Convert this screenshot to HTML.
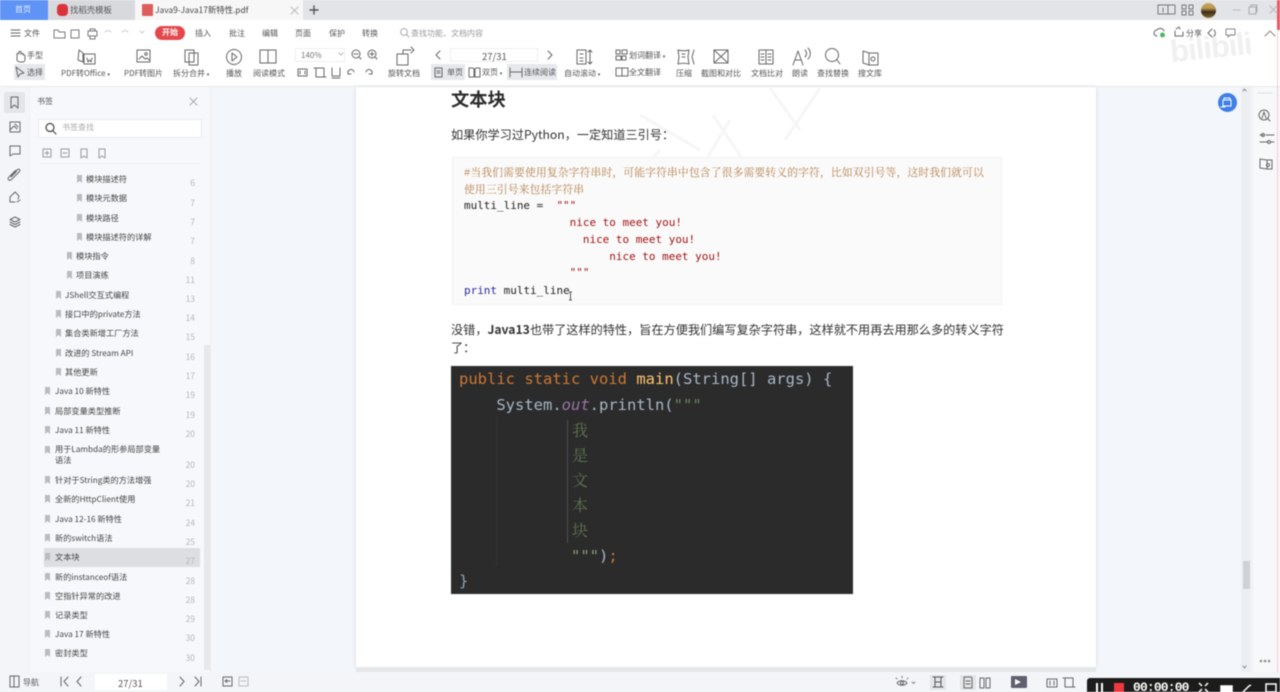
<!DOCTYPE html>
<html lang="zh"><head><meta charset="utf-8"><title>Java9-Java17新特性.pdf</title>
<style>
html,body{margin:0;padding:0;background:#f3f6fa;}
#r{position:relative;width:1280px;height:692px;overflow:hidden;background:#f3f6fa;font-family:"Noto Sans CJK SC","Liberation Sans",sans-serif;filter:blur(.45px);}
.b{position:absolute;}
.t{position:absolute;white-space:nowrap;height:12px;line-height:12px;font-size:8px;color:#555;margin-top:1px;}
.s{font-size:8.2px;color:#444;margin-top:0;}
.n{font-size:8.5px;color:#b5b8bc;width:24px;text-align:right;left:171px;margin-top:0;}
.m{position:absolute;white-space:pre;font-family:"DejaVu Sans Mono","Liberation Mono",monospace;font-size:10.97px;height:16px;line-height:16px;color:#222;left:464px;}
.cm{position:absolute;left:464px;white-space:nowrap;font-family:"Noto Serif CJK SC","Liberation Serif",serif;font-size:10.8px;color:#b5824f;height:16px;line-height:16px;}
.j{position:absolute;white-space:pre;font-family:"DejaVu Sans Mono","Liberation Mono",monospace;font-size:15.5px;height:24px;line-height:24px;color:#a9b7c6;left:459px;}
.jc{position:absolute;left:572px;font-family:"Noto Serif CJK SC",serif;font-size:16px;height:24px;line-height:24px;color:#5f7350;}
.p{position:absolute;white-space:nowrap;font-size:12.17px;color:#333;height:18px;line-height:18px;left:451px;}
svg{position:absolute;left:0;top:0;}
</style></head><body><div id="r">
<!-- tab bar -->
<div class="b" style="left:0;top:0;width:1280px;height:20px;background:#e2e4e7"></div>
<div class="b" style="left:0;top:0;width:48px;height:20px;background:#5f93f5"></div>
<div class="b" style="left:48px;top:0;width:87px;height:20px;background:#d8d9dc"></div>
<div class="b" style="left:135px;top:0;width:168px;height:20px;background:#f7f7f8"></div>
<span class="t" style="left:15px;top:3px;color:#e8f0ff">首页</span>
<div class="b" style="left:57px;top:4px;width:11px;height:12px;border-radius:4px;background:#d9343c"></div>
<span class="t" style="left:70px;top:3px;font-size:8.4px;color:#555">找稻壳模板</span>
<div class="b" style="left:142px;top:4px;width:11px;height:12px;border-radius:1px;background:#dc5d5a"></div>
<span class="t" style="left:155px;top:3px;font-size:8.4px;color:#444">Java9-Java17新特性.pdf</span>
<div class="b" style="left:1201px;top:3px;width:15px;height:15px;border-radius:50%;background:linear-gradient(#c9a860 0,#b8954f 35%,#3a2c18 60%,#8a6a30 100%)"></div>
<!-- toolbar -->
<div class="b" style="left:0;top:20px;width:1280px;height:66px;background:#fff"></div>
<div class="b" style="left:0;top:86px;width:1280px;height:1px;background:#e8e9eb"></div>
<div class="b" style="left:155px;top:26px;width:30px;height:14px;border-radius:7px;background:#e4484c"></div>
<span class="t" style="left:162px;top:26px;color:#fff;font-weight:bold">开始</span>
<span class="t" style="left:24px;top:27px">文件</span>
<span class="t" style="left:195px;top:27px">插入</span>
<span class="t" style="left:229px;top:27px">批注</span>
<span class="t" style="left:262px;top:27px">编辑</span>
<span class="t" style="left:295px;top:27px">页面</span>
<span class="t" style="left:329px;top:27px">保护</span>
<span class="t" style="left:362px;top:27px">转换</span>
<span class="t" style="left:411px;top:27px;color:#999">查找功能、文档内容</span>
<span class="t" style="left:1186px;top:27px;color:#555">分享</span>
<!-- highlights -->
<div class="b" style="left:14px;top:64px;width:31px;height:16px;background:#e6e8eb"></div>
<div class="b" style="left:431px;top:64px;width:34px;height:16px;background:#e6e8eb"></div>
<div class="b" style="left:507px;top:64px;width:50px;height:16px;background:#e6e8eb"></div>
<div class="b" style="left:295px;top:48px;width:50px;height:14px;border:1px solid #eee;box-sizing:border-box"></div>
<div class="b" style="left:450px;top:48px;width:88px;height:14px;border:1px solid #eee;box-sizing:border-box"></div>
<span class="t" style="left:27px;top:49px">手型</span>
<span class="t" style="left:27px;top:66px">选择</span>
<span class="t" style="left:61px;top:67px">PDF转Office <span style="font-size:5px">▾</span></span>
<span class="t" style="left:124px;top:67px">PDF转图片</span>
<span class="t" style="left:173px;top:67px">拆分合并 <span style="font-size:5px">▾</span></span>
<span class="t" style="left:226px;top:67px">播放</span>
<span class="t" style="left:253px;top:67px">阅读模式</span>
<span class="t" style="left:301px;top:49px;color:#777">140%</span>
<span class="t" style="left:388px;top:67px">旋转文档</span>
<span class="t" style="left:482px;top:49px;font-size:9.5px;color:#555">27/31</span>
<span class="t" style="left:447px;top:66px">单页</span>
<span class="t" style="left:482px;top:66px">双页 <span style="font-size:5px">▾</span></span>
<span class="t" style="left:524px;top:66px">连续阅读</span>
<span class="t" style="left:564px;top:67px">自动滚动 <span style="font-size:5px">▾</span></span>
<span class="t" style="left:629px;top:49px">划词翻译 <span style="font-size:5px">▾</span></span>
<span class="t" style="left:629px;top:66px">全文翻译</span>
<span class="t" style="left:676px;top:67px">压缩</span>
<span class="t" style="left:701px;top:67px">截图和对比</span>
<span class="t" style="left:751px;top:67px">文档比对</span>
<span class="t" style="left:792px;top:67px">朗读</span>
<span class="t" style="left:817px;top:67px">查找替换</span>
<span class="t" style="left:858px;top:67px">搜文库</span>
<span class="b" style="left:1170px;top:30px;font:bold 31px 'Liberation Sans',sans-serif;color:#f0f0f0;transform:rotate(-6deg);white-space:nowrap;letter-spacing:-1px">bilibili</span>
<!-- left rail / sidebar -->
<div class="b" style="left:0;top:87px;width:29px;height:585px;background:#f3f5f8;border-right:1px solid #eceef1"></div>
<div class="b" style="left:30px;top:87px;width:180px;height:585px;background:#f6f8fb;border-right:1px solid #eceef1"></div>
<div class="b" style="left:4px;top:92px;width:21px;height:21px;background:#e3e5e8;border-radius:2px"></div>
<span class="t" style="left:37px;top:95px">书签</span>
<div class="b" style="left:38px;top:119px;width:164px;height:19px;background:#fff;border:1px solid #e8eaed;border-radius:2px;box-sizing:border-box"></div>
<span class="t" style="left:62px;top:121px;color:#aaa">书签查找</span>
<div class="b" style="left:40px;top:163px;width:160px;height:1px;background:#eef0f2"></div>
<div class="b" style="left:44px;top:548px;width:156px;height:19px;background:#dcdee2"></div>
<div class="b" style="left:204px;top:345px;width:6px;height:325px;background:#e6e8eb"></div>
<svg width="1280" height="692"><path fill="#b8bbbf" d="M77 175h5v8l-2.500-2-2.500 2zM77 194h5v8l-2.500-2-2.500 2zM77 214h5v8l-2.500-2-2.500 2zM77 233h5v8l-2.500-2-2.500 2zM67 252h5v8l-2.500-2-2.500 2zM67 271h5v8l-2.500-2-2.500 2zM56 291h5v8l-2.500-2-2.500 2zM56 310h5v8l-2.500-2-2.500 2zM56 329h5v8l-2.500-2-2.500 2zM56 349h5v8l-2.500-2-2.500 2zM56 368h5v8l-2.500-2-2.500 2zM45 387h5v8l-2.500-2-2.500 2zM45 407h5v8l-2.500-2-2.500 2zM45 426h5v8l-2.500-2-2.500 2zM45 446h5v8l-2.500-2-2.500 2zM45 476h5v8l-2.500-2-2.500 2zM45 495h5v8l-2.500-2-2.500 2zM45 515h5v8l-2.500-2-2.500 2zM45 534h5v8l-2.500-2-2.500 2zM45 553h5v8l-2.500-2-2.500 2zM45 573h5v8l-2.500-2-2.500 2zM45 592h5v8l-2.500-2-2.500 2zM45 611h5v8l-2.500-2-2.500 2zM45 630h5v8l-2.500-2-2.500 2zM45 649h5v8l-2.500-2-2.500 2z"/></svg>
<span class="t s" style="left:86px;top:173px">模块描述符</span><span class="t n" style="top:177px">6</span>
<span class="t s" style="left:86px;top:192px">模块元数据</span><span class="t n" style="top:197px">7</span>
<span class="t s" style="left:86px;top:212px">模块路径</span><span class="t n" style="top:216px">7</span>
<span class="t s" style="left:86px;top:231px">模块描述符的详解</span><span class="t n" style="top:235px">7</span>
<span class="t s" style="left:76px;top:250px">模块指令</span><span class="t n" style="top:255px">8</span>
<span class="t s" style="left:76px;top:269px">项目演练</span><span class="t n" style="top:274px">11</span>
<span class="t s" style="left:65px;top:289px">JShell交互式编程</span><span class="t n" style="top:293px">13</span>
<span class="t s" style="left:65px;top:308px">接口中的private方法</span><span class="t n" style="top:312px">14</span>
<span class="t s" style="left:65px;top:327px">集合类新增工厂方法</span><span class="t n" style="top:331px">15</span>
<span class="t s" style="left:65px;top:347px">改进的 Stream API</span><span class="t n" style="top:351px">16</span>
<span class="t s" style="left:65px;top:366px">其他更新</span><span class="t n" style="top:370px">17</span>
<span class="t s" style="left:55px;top:385px">Java 10 新特性</span><span class="t n" style="top:389px">19</span>
<span class="t s" style="left:55px;top:405px">局部变量类型推断</span><span class="t n" style="top:409px">19</span>
<span class="t s" style="left:55px;top:424px">Java 11 新特性</span><span class="t n" style="top:428px">20</span>
<span class="t s" style="left:55px;top:443px">用于Lambda的形参局部变量</span>
<span class="t s" style="left:55px;top:454px">语法</span><span class="t n" style="top:459px">20</span>
<span class="t s" style="left:55px;top:474px">针对于String类的方法增强</span><span class="t n" style="top:478px">20</span>
<span class="t s" style="left:55px;top:493px">全新的HttpClient使用</span><span class="t n" style="top:497px">21</span>
<span class="t s" style="left:55px;top:513px">Java 12-16 新特性</span><span class="t n" style="top:517px">24</span>
<span class="t s" style="left:55px;top:532px">新的switch语法</span><span class="t n" style="top:536px">25</span>
<span class="t s" style="left:55px;top:551px">文本块</span><span class="t n" style="top:555px">27</span>
<span class="t s" style="left:55px;top:571px">新的instanceof语法</span><span class="t n" style="top:575px">28</span>
<span class="t s" style="left:55px;top:590px">空指针异常的改进</span><span class="t n" style="top:594px">28</span>
<span class="t s" style="left:55px;top:609px">记录类型</span><span class="t n" style="top:613px">29</span>
<span class="t s" style="left:55px;top:628px">Java 17 新特性</span><span class="t n" style="top:632px">30</span>
<span class="t s" style="left:55px;top:647px">密封类型</span><span class="t n" style="top:652px">30</span>
<!-- page -->
<div class="b" style="left:356px;top:87px;width:740px;height:580px;background:#fff;box-shadow:0 0 4px #d5d7da"></div>
<svg width="1280" height="692"><g fill="none" stroke="#f6f6f6" stroke-width="3">
<path d="M653 168L697 222M587 245L617 278M713 115L760 185M730 120L700 170L745 195M770 88L800 130M820 88L785 140M660 150L625 190L690 222M640 115L700 150"/></g></svg>
<span class="b" style="left:451px;top:86px;font-size:18.3px;font-weight:bold;color:#2b2b2b;line-height:26px;white-space:nowrap">文本块</span>
<span class="p" style="top:125px">如果你学习过Python，一定知道三引号：</span>
<div class="b" style="left:452px;top:157px;width:550px;height:148px;box-sizing:border-box;background:#fafafa;border:1px solid #f1f1f1;border-radius:2px"></div>
<span class="cm" style="top:165px;letter-spacing:.13px">#当我们需要使用复杂字符串时，可能字符串中包含了很多需要转义的字符，比如双引号等，这时我们就可以</span>
<span class="cm" style="top:182px;letter-spacing:.13px">使用三引号来包括字符串</span>
<span class="m" style="top:198px">multi_line =  <span style="color:#a31515">"""</span></span>
<span class="m" style="top:215px;color:#a31515">                nice to meet you!</span>
<span class="m" style="top:232px;color:#a31515">                  nice to meet you!</span>
<span class="m" style="top:249px;color:#a31515">                      nice to meet you!</span>
<span class="m" style="top:265px;color:#a31515">                """</span>
<span class="m" style="top:283px"><span style="color:#2a2a9a">print</span> multi_line</span>
<svg width="1280" height="692"><path d="M569 292h3M569 300h3M570.500 292v8" stroke="#555" fill="none"/></svg>
<span class="p" style="top:320px">没错，<b>Java13</b>也带了这样的特性，旨在方便我们编写复杂字符串，这样就不用再去用那么多的转义字符</span>
<span class="p" style="top:338px">了：</span>
<!-- code image -->
<div class="b" style="left:451px;top:366px;width:402px;height:228px;background:#2b2b2b"></div>
<span class="j" style="top:367px"><span style="color:#cc7832">public static void</span> <span style="color:#ffc66d">main</span>(String[] args) {</span>
<span class="j" style="top:393px">    System.<i style="color:#9876aa">out</i>.println(<span style="color:#6a8759">"""</span></span>
<span class="jc" style="top:418px">我</span><span class="jc" style="top:443px">是</span><span class="jc" style="top:468px">文</span><span class="jc" style="top:493px">本</span><span class="jc" style="top:518px">块</span>
<span class="j" style="top:544px;left:571px"><span style="color:#8a9a7a">"""</span>)<span style="color:#cc7832">;</span></span>
<span class="j" style="top:569px;color:#8fa5b5">}</span>
<div class="b" style="left:567px;top:420px;width:1px;height:123px;background:#4a4f4a"></div>
<div class="b" style="left:496px;top:416px;width:1px;height:150px;background:#333"></div>
<!-- right -->
<div class="b" style="left:1218px;top:93px;width:19px;height:19px;border-radius:50%;background:#3f7fe8"></div>
<div class="b" style="left:1241px;top:87px;width:10px;height:585px;background:#eceef1"></div>
<div class="b" style="left:1243px;top:561px;width:7px;height:28px;background:#cfd1d4"></div>
<div class="b" style="left:1252px;top:87px;width:26px;height:585px;background:#f7f8fa;border-left:1px solid #eceef1"></div>
<div class="b" style="left:1277px;top:0;width:0;height:692px;border-left:1.5px dotted #f2a0a8"></div>
<div class="b" style="left:1277px;top:0;width:3px;height:30px;background:#ee5560"></div>
<div class="b" style="left:1277px;top:672px;width:3px;height:20px;background:#ee3c48"></div>
<!-- status bar -->
<div class="b" style="top:667px;height:5px;background:#e4e6e8;left:356px;width:740px"></div>
<div class="b" style="left:0;top:672px;width:1280px;height:20px;background:#f3f5f8"></div>
<span class="t" style="left:23px;top:676px">导航</span>
<div class="b" style="left:95px;top:674px;width:72px;height:16px;background:#fff"></div>
<span class="t" style="left:118px;top:676px;font-size:9.5px;color:#555">27/31</span>
<div class="b" style="left:930px;top:675px;width:16px;height:15px;background:#e3e5e8"></div>
<div class="b" style="left:960px;top:675px;width:16px;height:15px;background:#e3e5e8"></div>
<div class="b" style="left:1011px;top:676px;width:16px;height:12px;background:#5f6070;border-radius:1px"></div>
<div class="b" style="left:1015px;top:679px;width:0;height:0;border-left:6px solid #fff;border-top:3.5px solid transparent;border-bottom:3.5px solid transparent"></div>
<!-- icons -->
<svg width="1280" height="692"><circle cx="1162.500" cy="35" r="2.500" fill="#4cb860"/><g fill="none" stroke="#666" stroke-width="1" stroke-linecap="round" stroke-linejoin="round">
<!-- tab bar -->
<path d="M291 7l7 7M298 7l-7 7" stroke="#bbb"/><path d="M310 10h8M314 6v8" stroke="#555" stroke-width="1.400"/>
<path d="M1158 5h17v9h-17zM1168 5v9M1163 8v4" stroke="#777"/>
<path d="M1182 5h4v4h-4zM1189 5h4v4h-4zM1182 11h4v4h-4zM1189 11h4v4h-4z" stroke="#777"/>
<path d="M1233 10h7" stroke="#bbb"/><path d="M1249 7h7v7h-7zM1251 7V5h6v7" stroke="#aaa"/><path d="M1270 6l7 7M1277 6l-7 7" stroke="#bbb"/>
<!-- menu row -->
<path d="M11 30h9M11 33h9M11 36h9"/><path d="M54 30h4l1 2h6v6H54zM71 30h8v8h-8zM88 31h9v5h-9zM90 31v-2h5v2zM90 36v3h5v-3z" stroke="#777"/>
<path d="M105 32c2-2 4-2 6 0M122 32c2-2 4-2 6 0M140 31l2 2 2-2" stroke="#ccc"/>
<circle cx="404" cy="32" r="3.400" stroke="#aaa"/><path d="M407 35l2 2" stroke="#aaa"/>
<path d="M1157 36a3 3 0 0 1 0-6 4 4 0 0 1 7 1"/><path d="M1176 29l3-2 1 2M1175 31v5h8v-4"/><path d="M1212 29l-4 4 4 4M1214 30a4 4 0 0 1 0 6"/><path d="M1226 29h9v6h-5l-2 2v-2h-2z" stroke="#888"/><path d="M1265 36l5-5 5 5" stroke="#888"/>
<!-- row 2 -->
<path d="M17 60v-6c0-1 2-1 2 0v-2c0-1 2-1 2 0v2c1-1 2-1 2 0v1c1-1 2 0 2 1v3c0 2-1 3-2 3h-3c-1 0-3-1-3-2z"/>
<path d="M16 67l2 10 2-3 4-1z"/>
<path d="M79 50l4 3v9l-5-2zM84 54h11v10H84zM87 58l1 4 1.500-2 1.500 2 1-4"/>
<path d="M137 50h13v12h-13zM139 59l3-3 3 3 2-1 2 2"/><circle cx="146" cy="54" r="1.200"/>
<path d="M185 50h9v12h-9zM189 53h9v12h-9z"/>
<circle cx="234" cy="57" r="7.500"/><path d="M232 53l5 4-5 4z"/>
<path d="M260 50h8v13h-8zM268 50h8v13h-8z"/>
<path d="M339 53l2 2 2-2" stroke="#bbb"/>
<circle cx="356" cy="54" r="4"/><path d="M359 57l2 2M354 54h4"/><circle cx="372" cy="54" r="4"/><path d="M375 57l2 2M370 54h4M372 52v4"/>
<path d="M298 69h9v7h-9zM300 71v3M305 71v3M316 68h8v9h-8zM314 68h3M323 77h3M332 68v8h8v-8M332 78h8M348 73a3 3 0 0 1 6-1M348 71v3h3M366 72a3 3 0 0 1 6 1M372 71v3h-3"/>
<path d="M397 54h11v11h-11zM403 54v-4h8M411 47l3 3-3 3"/>
<path d="M440 51l-4 4 4 4M548 51l4 4-4 4"/>
<path d="M435 68h7v9h-7zM437 71h3M437 73h3M469 68h4l1 1v8h-5zM475 69l1-1h4v9h-5zM510 68v9M522 68v9M510 72h12"/>
<path d="M577 50h9v14h-9zM580 54h3M580 58h3M580 61h3M590 50v14M588 52l2-2 2 2M588 62l2 2 2-2"/>
<path d="M616 50h4v4h-4zM622 50h5v4h-5zM616 56h5v4h-5zM622 56h4v4h-4zM616 68h12v8h-12zM622 68v8"/>
<path d="M678 50c3 1 8 1 11 0l-1 7 1 7c-3-1-8-1-11 0l1-7zM682 54h3M682 57h3M694 50l-2 7 2 7"/>
<path d="M714 50h14v13h-14zM714 50l14 13M728 50l-14 13"/>
<path d="M759 50h14v14h-14zM766 50v14M761 54h3M761 57h3M761 60h3M768 54h3M768 57h3M768 60h3"/>
<path d="M793 65l5-14 5 14M795 60h6M805 50c2 2 2 5 0 7M808 48c3 3 3 8 0 11"/>
<circle cx="832" cy="55" r="6.500"/><path d="M837 60l3 4"/>
<path d="M863 51l6 2v12l-6-2zM869 53h9v12h-9z"/><circle cx="873" cy="59" r="2"/>
<!-- rail -->
<path d="M11 97h7v11l-3.500-3-3.500 3z"/><path d="M10 122h10v10h-10zM10 130l4-4 3 3M15 124l3 3"/>
<path d="M10 146h10v8h-7l-3 2z"/><path d="M11 176l6-6c2-2 4 0 2 2l-7 7c-3 3-5 0-3-2l6-6c1-1 2 0 1 1l-5 5"/><path d="M10 197l5-5 4 4-1 3M10 197v5h5M17 202l3-2"/>
<path d="M15 217l5 2.500-5 2.500-5-2.500zM10 222l5 2.500 5-2.500M10 224.500l5 2.500 5-2.500"/>
<path d="M190 98l7 7M197 98l-7 7" stroke="#aaa"/><circle cx="50" cy="127.500" r="4" stroke="#444" stroke-width="1.200"/><path d="M53 131l3 3" stroke="#444" stroke-width="1.200"/>
<g stroke="#999"><path d="M43 149h8v8h-8zM47 151v4M45 153h4M61 149h8v8h-8zM63 153h4M81 149h6v9l-3-2-3 2zM99 149h6v9l-3-2-3 2z"/></g>
<!-- right -->
<path d="M1223 100h8v6h-8zM1224 100v-2h6v2M1221 107h4" stroke="#fff"/>
<path d="M1243 91l1.500-2 1.500 2M1243 666l1.500 2 1.500-2" stroke="#888"/>
<path d="M1258 93h14" stroke="#ddd"/><circle cx="1264" cy="115" r="5"/><path d="M1262 118l2-6 2 6M1268 119l2 2"/>
<path d="M1260 135h3M1266 135h8M1260 142h8M1271 142h3"/><circle cx="1263" cy="135" r="1.500"/><circle cx="1269" cy="142" r="1.500"/>
<path d="M1260 159l7 1v9l-7-1zM1267 160h5v9h-5z"/><circle cx="1268" cy="165" r="1.500"/>
<g stroke="#888"><circle cx="1261" cy="661" r=".8"/><circle cx="1265" cy="661" r=".8"/><circle cx="1269" cy="661" r=".8"/></g>
<!-- status -->
<path d="M10 676h9v11h-9zM14 676v11"/>
<path d="M61 677v9M68 677l-4 4.500 4 4.500M81 677l-4 4.500 4 4.500M180 677l4 4.500-4 4.500M195 677l4 4.500-4 4.500M201 677v9"/>
<path d="M223 677h9v9h-9zM225 681h5M225 681l2-1.500M225 681l2 1.500"/><path d="M239 677h9v9h-9zM241 681h5" stroke="#bbb"/>
<path d="M897 683c2-3 8-3 10 0-2 3-8 3-10 0z"/><circle cx="902" cy="683" r="1.500"/><path d="M896 678l1 1M902 676v2M908 678l-1 1M912 682l1.500 1.500 1.500-1.500" stroke="#888"/>
<path d="M933 677h10M933 687h10M935 677v10M941 677v10M935 682h6" stroke="#555"/>
<path d="M964 677h7l1 1v10h-8zM966 681h4M966 684h4"/><path d="M980 678h4v10h-4zM986 678h4v10h-4z"/>
<path d="M1047 679h10v8h-10zM1050 681v4M1054 681v4M1065 678h8v9h-8zM1063 678h3M1072 687h3"/>
</g></svg>
<!-- recording bar -->
<div class="b" style="left:1087px;top:678px;width:193px;height:14px;background:#1c1c1c;border-radius:3px 0 0 0"></div>
<div class="b" style="left:1096px;top:683px;width:2px;height:9px;background:#fff"></div>
<div class="b" style="left:1101px;top:683px;width:2px;height:9px;background:#fff"></div>
<div class="b" style="left:1114px;top:683px;width:10px;height:9px;background:#f0393f"></div>
<span class="b" style="left:1133px;top:680px;font:bold 13px/16px 'Liberation Mono',monospace;color:#fff;letter-spacing:-.85px;white-space:nowrap">00:00:00</span>
<svg width="1280" height="692"><g fill="none" stroke="#fff" stroke-width="1.500"><path d="M1199 683l3 3M1208 683l-3 3M1199 692l3-3M1208 692l-3-3"/><path d="M1221 686h11v6h-11z" fill="#fff"/><path d="M1243 692l6-6 2-1"/><path d="M1266 684h10v8h-10z"/></g></svg>
</div></body></html>
